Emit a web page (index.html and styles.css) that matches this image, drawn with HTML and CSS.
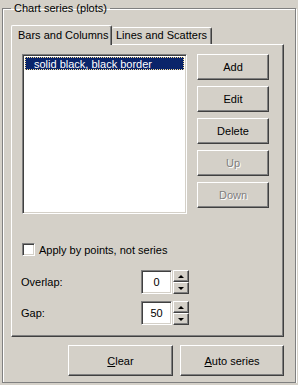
FILE: index.html
```html
<!DOCTYPE html>
<html lang="en">
<head>
  <meta charset="UTF-8">
  <title>Chart series</title>
  <link rel="stylesheet" href="styles.css">
</head>
<body>
  <fieldset class="group">
    <legend>Chart series (plots)</legend>

    <div class="tabs">
      <div class="tab active">Bars and Columns</div>
      <div class="tab">Lines and Scatters</div>
    </div>

    <div class="panel">
      <div class="top-row">
        <div class="listbox">
          <div class="item selected">solid black, black border</div>
        </div>
        <div class="side-buttons">
          <button class="btn">Add</button>
          <button class="btn">Edit</button>
          <button class="btn">Delete</button>
          <button class="btn disabled">Up</button>
          <button class="btn disabled">Down</button>
        </div>
      </div>

      <label class="check-row">
        <span class="checkbox"></span>
        Apply by points, not series
      </label>

      <div class="spin-row">
        <span class="spin-label">Overlap:</span>
        <span class="spin-value">0</span>
        <span class="spin-buttons">
          <span class="spin-btn"><i class="arrow-up"></i></span>
          <span class="spin-btn"><i class="arrow-down"></i></span>
        </span>
      </div>
      <div class="spin-row">
        <span class="spin-label">Gap:</span>
        <span class="spin-value">50</span>
        <span class="spin-buttons">
          <span class="spin-btn"><i class="arrow-up"></i></span>
          <span class="spin-btn"><i class="arrow-down"></i></span>
        </span>
      </div>
    </div>

    <div class="bottom-row">
      <button class="btn big clear"><u>C</u>lear</button>
      <button class="btn big auto"><u>A</u>uto series</button>
    </div>
  </fieldset>
</body>
</html>
```

FILE: styles.css
```css
body { margin: 0; background: #d4d0c8; font: 11px "Liberation Sans", Arial, sans-serif; color: #000; }

.group { margin: 2px 0 0 2px; width: 293px; box-sizing: border-box; padding: 10px 11px 6px 8px; border: 1px solid #808080; box-shadow: inset 1px 1px #fff, 1px 1px #fff; }
.group legend { margin-left: 0; padding: 0 3px; line-height: 13px; }

.tabs { display: flex; align-items: flex-end; height: 19px; }
.tab { box-sizing: border-box; height: 17px; line-height: 15px; border-top: 1px solid #fff; border-left: 1px solid #fff; border-right: 1px solid #404040; box-shadow: inset -1px 0 #808080; border-radius: 2px 2px 0 0; }
.tab:first-child { width: 101px; padding-left: 6px; }
.tab:last-child { width: 100px; padding-left: 4px; border-left: none; }
.tab.active { height: 20px; margin-bottom: -1px; line-height: 19px; position: relative; z-index: 1; background: #d4d0c8; }

.panel { box-sizing: border-box; width: 273px; height: 293px; padding: 9px 0 0 10px; border: 1px solid #404040; border-top-color: #fff; border-left-color: #fff; box-shadow: inset -1px -1px #808080; }

.top-row { display: flex; }
.listbox { box-sizing: border-box; width: 165px; height: 160px; background: #fff; border: 1px solid; border-color: #808080 #fff #fff #808080; box-shadow: inset 1px 1px #404040, inset -1px -1px #d4d0c8; padding: 2px; }
.item { height: 13px; line-height: 12px; padding-left: 8px; white-space: nowrap; }
.item.selected { background: #0a246a; color: #fff; box-sizing: border-box; border: 1px dotted #f5db95; padding-left: 8px; }

.side-buttons { display: flex; flex-direction: column; gap: 6px; margin-left: 10px; }
.btn { box-sizing: border-box; width: 72px; height: 26px; padding: 0; font: inherit; color: #000; background: #d4d0c8; border: 1px solid; border-color: #fff #404040 #404040 #fff; box-shadow: inset -1px -1px #808080; }
.btn.disabled { color: #808080; text-shadow: 1px 1px #fff; }

.check-row { display: flex; align-items: center; gap: 4px; margin-top: 29px; height: 13px; }
.checkbox { box-sizing: border-box; width: 13px; height: 13px; background: #fff; border: 1px solid; border-color: #808080 #fff #fff #808080; box-shadow: inset 1px 1px #404040, inset -1px -1px #d4d0c8; }

.spin-row { display: flex; align-items: center; height: 24px; margin-top: 7px; margin-left: -1px; }
.check-row + .spin-row { margin-top: 14px; }
.spin-label { width: 120px; }
.spin-value { box-sizing: border-box; width: 31px; height: 24px; line-height: 22px; text-align: center; background: #fff; border: 1px solid; border-color: #808080 #fff #fff #808080; box-shadow: inset 1px 1px #404040, inset -1px -1px #d4d0c8; }
.spin-buttons { display: flex; flex-direction: column; margin-left: 1px; }
.spin-btn { box-sizing: border-box; width: 16px; height: 12px; display: flex; align-items: center; justify-content: center; border: 1px solid; border-color: #fff #404040 #404040 #fff; box-shadow: inset -1px -1px #808080; }
.arrow-up { width: 0; height: 0; border-left: 3px solid transparent; border-right: 3px solid transparent; border-bottom: 3px solid #000; }
.arrow-down { width: 0; height: 0; border-left: 3px solid transparent; border-right: 3px solid transparent; border-top: 3px solid #000; }

.bottom-row { display: flex; justify-content: flex-end; gap: 7px; margin-top: 8px; }
.btn.big { height: 31px; }
.btn.clear { width: 105px; }
.btn.auto { width: 104px; }
```
